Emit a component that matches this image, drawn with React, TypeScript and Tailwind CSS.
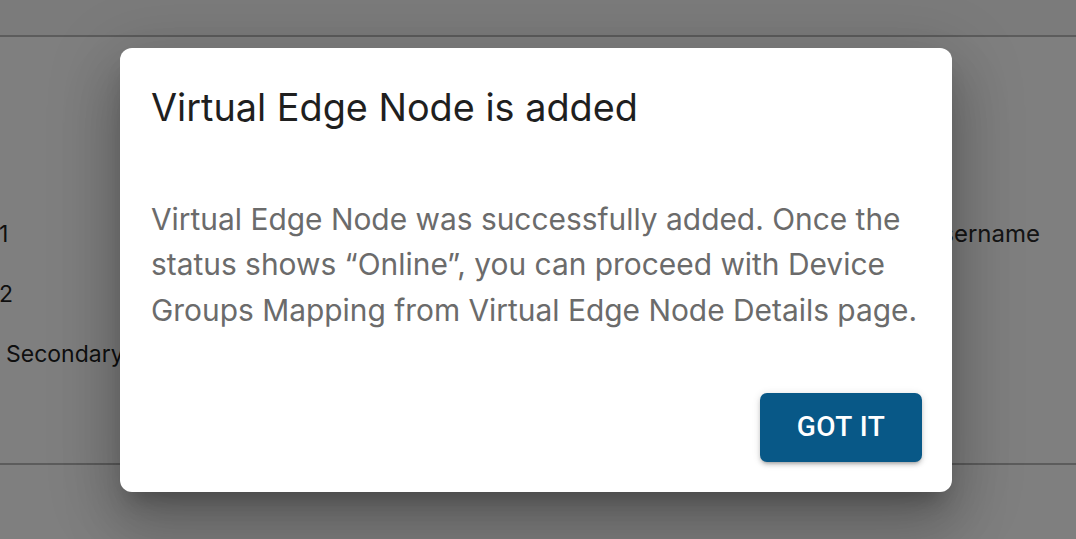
import React from "react";

export default function App() {
  return (
    <div className="relative w-[1076px] h-[539px] overflow-hidden bg-white font-['Inter',sans-serif] text-[#1f1f1f]">
      {/* underlying page */}
      <div className="h-[37px] bg-[#f6f6f6] border-b-2 border-[#b8b8b8]" />
      <div className="h-[428px] border-b-2 border-[#b8b8b8] flex justify-between text-[23px]">
        <div className="flex flex-col pt-[183px] gap-[32px] -ml-[1px]">
          <div className="h-[28px] leading-[28px]">1</div>
          <div className="h-[28px] leading-[28px]">2</div>
          <div className="h-[28px] leading-[28px] pl-[7px]">Secondary</div>
        </div>
        <div className="pt-[183px] pr-[36px]">
          <div className="h-[28px] leading-[28px] text-[24px] text-[#2a2a2a]">Username</div>
        </div>
      </div>

      {/* overlay */}
      <div className="absolute inset-0 bg-black/50 flex items-center justify-center pr-[4px]">
        <div className="w-[832px] h-[444px] bg-white rounded-[12px] flex flex-col shadow-[0_16px_22px_-10px_rgba(0,0,0,0.25),0_36px_56px_4px_rgba(0,0,0,0.16),0_14px_68px_12px_rgba(0,0,0,0.14)]">
          <h2 className="pt-[35px] px-[31px] text-[37.8px] leading-[48px] font-normal text-[#1f1f1f]">
            Virtual Edge Node is added
          </h2>
          <p className="mt-[66px] px-[31px] text-[29.9px] leading-[45.5px] text-[#6b6b6b]">
            Virtual Edge Node was successfully added. Once the status shows “Online”, you can proceed with Device Groups Mapping from Virtual Edge Node Details page.
          </p>
          <div className="mt-auto flex justify-end px-[30px] pb-[30px]">
            <button className="w-[162px] h-[69px] rounded-[7px] bg-[#085887] text-white font-['Roboto',sans-serif] font-medium text-[28px] tracking-[0.5px] uppercase shadow-[0_3px_3px_-2px_rgba(0,0,0,0.2),0_3px_4px_0_rgba(0,0,0,0.14),0_1px_8px_0_rgba(0,0,0,0.12)]">
              Got it
            </button>
          </div>
        </div>
      </div>
    </div>
  );
}
